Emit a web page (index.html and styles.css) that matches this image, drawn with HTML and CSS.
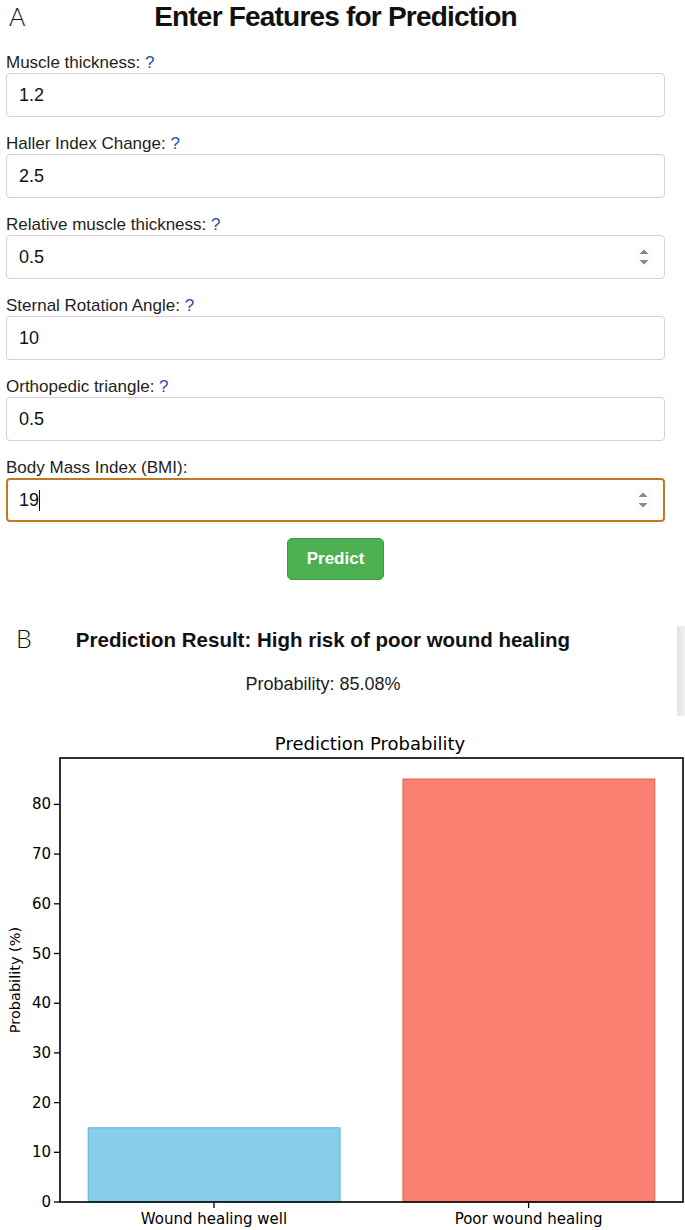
FILE: index.html
```html
<!DOCTYPE html>
<html lang="en">
<head>
    <meta charset="UTF-8">
    <meta name="viewport" content="width=device-width, initial-scale=1.0">
    <title>Wound Healing Prediction</title>
    <link rel="stylesheet" href="styles.css">
</head>
<body>
    <div class="form-panel">
        <span class="panel-tag">A</span>
        <h2>Enter Features for Prediction</h2>

        <form class="fields" onsubmit="return false;">
            <div class="field">
                <label>Muscle thickness: <span class="help">?</span></label>
                <input type="number" step="any" value="1.2">
            </div>
            <div class="field">
                <label>Haller Index Change: <span class="help">?</span></label>
                <input type="number" step="any" value="2.5">
            </div>
            <div class="field">
                <label>Relative muscle thickness: <span class="help">?</span></label>
                <input type="number" step="any" class="spin" value="0.5">
            </div>
            <div class="field">
                <label>Sternal Rotation Angle: <span class="help">?</span></label>
                <input type="number" step="any" value="10">
            </div>
            <div class="field">
                <label>Orthopedic triangle: <span class="help">?</span></label>
                <input type="number" step="any" value="0.5">
            </div>
            <div class="field">
                <label>Body Mass Index (BMI):</label>
                <div class="input-wrap">
                    <input type="number" step="any" class="spin focused" value="19">
                    <span class="caret"></span>
                </div>
            </div>
            <button class="predict-btn" type="submit">Predict</button>
        </form>
    </div>

    <div class="result-panel">
        <span class="panel-tag">B</span>
        <div class="result-body">
            <h3>Prediction Result: High risk of poor wound healing</h3>
            <p class="probability">Probability: 85.08%</p>
        </div>
        <div class="scroll-edge"></div>
    </div>

    <!-- bar chart, drawn in page coordinates (viewBox starts at y=716) -->
    <svg class="chart" width="685" height="514" viewBox="0 716 685 514">
        <text class="chart-title" x="370" y="750" text-anchor="middle">Prediction Probability</text>

        <rect class="bar-good" x="88.3" y="1127.8" width="251.7" height="74.2"></rect>
        <rect class="bar-poor" x="403" y="779.1" width="251.7" height="422.9"></rect>

        <rect class="frame" x="60" y="758" width="623" height="444"></rect>

        <g class="ticks">
            <line x1="54" y1="1202" x2="60" y2="1202"></line>
            <line x1="54" y1="1152.3" x2="60" y2="1152.3"></line>
            <line x1="54" y1="1102.6" x2="60" y2="1102.6"></line>
            <line x1="54" y1="1052.9" x2="60" y2="1052.9"></line>
            <line x1="54" y1="1003.2" x2="60" y2="1003.2"></line>
            <line x1="54" y1="953.5" x2="60" y2="953.5"></line>
            <line x1="54" y1="903.8" x2="60" y2="903.8"></line>
            <line x1="54" y1="854.1" x2="60" y2="854.1"></line>
            <line x1="54" y1="804.4" x2="60" y2="804.4"></line>
            <line x1="214" y1="1202" x2="214" y2="1208"></line>
            <line x1="528.6" y1="1202" x2="528.6" y2="1208"></line>
        </g>

        <g class="tick-labels y-labels">
            <text x="51" y="1202">0</text>
            <text x="51" y="1152.3">10</text>
            <text x="51" y="1102.6">20</text>
            <text x="51" y="1052.9">30</text>
            <text x="51" y="1003.2">40</text>
            <text x="51" y="953.5">50</text>
            <text x="51" y="903.8">60</text>
            <text x="51" y="854.1">70</text>
            <text x="51" y="804.4">80</text>
        </g>
        <g class="tick-labels x-labels">
            <text x="214" y="1224">Wound healing well</text>
            <text x="528.6" y="1224">Poor wound healing</text>
        </g>

        <text class="axis-label" x="0" y="0" transform="translate(20 980) rotate(-90)">Probability (%)</text>
    </svg>
</body>
</html>
```

FILE: styles.css
```css
body {
    margin: 0;
    font-family: "Liberation Sans", Arial, sans-serif;
    color: #1e1e1e;
    background: #fff;
}

/* panel letters */
.panel-tag {
    position: absolute;
    font-family: Lato, "Liberation Sans", sans-serif;
    font-weight: 300;
    font-size: 25px;
    line-height: 1;
    color: #111;
}

.form-panel {
    position: relative;
    padding: 0 20px 0 6px;
}
.form-panel .panel-tag {
    left: 9px;
    top: 4px;
}
.form-panel h2 {
    margin: 0;
    text-align: center;
    font-size: 28px;
    line-height: 34px;
    letter-spacing: -0.8px;
    font-weight: bold;
    color: #111;
}

.fields {
    margin: 18px 0 0;
    display: flex;
    flex-direction: column;
    gap: 16px;
}
.field label {
    display: block;
    font-size: 17px;
    line-height: 21px;
    color: #1e1e1e;
}
.help {
    color: #1f4fa6;
}
.field input {
    display: block;
    width: 100%;
    box-sizing: border-box;
    height: 44px;
    padding: 0 12px;
    font-family: "Liberation Sans", Arial, sans-serif;
    font-size: 18px;
    color: #111;
    background: #fff;
    border: 1px solid #d2d2d2;
    border-radius: 4px;
    outline: none;
}
.field input.focused {
    border: 2px solid #c07a23;
    padding-left: 11px;
}
.spin::-webkit-inner-spin-button {
    opacity: 1;
}
.input-wrap {
    position: relative;
}
.caret {
    position: absolute;
    left: 33px;
    top: 12px;
    width: 1px;
    height: 21px;
    background: #111;
}

.predict-btn {
    display: block;
    margin: 0 auto;
    width: 97px;
    height: 42px;
    background: #4caf50;
    color: #fff;
    border: 1px solid #3b9a3f;
    border-radius: 5px;
    font-family: "Liberation Sans", Arial, sans-serif;
    font-size: 17px;
    font-weight: bold;
    cursor: pointer;
}

.result-panel {
    position: relative;
    display: flex;
    margin-top: 46px;
    height: 90px;
}
.result-panel .panel-tag {
    left: 16px;
    top: 0;
}
.result-body {
    width: 646px;
    padding-top: 2px;
    text-align: center;
}
.result-body h3 {
    margin: 0;
    font-size: 20.5px;
    line-height: 24px;
    font-weight: bold;
    color: #111;
}
.probability {
    margin: 21px 0 0;
    font-size: 18px;
    line-height: 22px;
}
.scroll-edge {
    margin-left: auto;
    width: 8px;
    background: linear-gradient(to right, #e2e2e2, #f2f2f2);
}

/* chart */
.chart {
    display: block;
}
.chart text {
    font-family: "DejaVu Sans", sans-serif;
    fill: #000;
}
.chart-title {
    font-size: 18px;
}
.frame {
    fill: none;
    stroke: #000;
    stroke-width: 1.6;
}
.bar-good {
    fill: #87ceeb;
    stroke: #6cb7d8;
    stroke-width: 1.2;
}
.bar-poor {
    fill: #fa8072;
    stroke: #e3685b;
    stroke-width: 1.2;
}
.ticks line {
    stroke: #000;
    stroke-width: 1.3;
}
.tick-labels text {
    font-size: 15px;
}
.y-labels text {
    text-anchor: end;
    dominant-baseline: central;
}
.x-labels text {
    text-anchor: middle;
}
.axis-label {
    font-size: 14.5px;
    text-anchor: middle;
}
```
